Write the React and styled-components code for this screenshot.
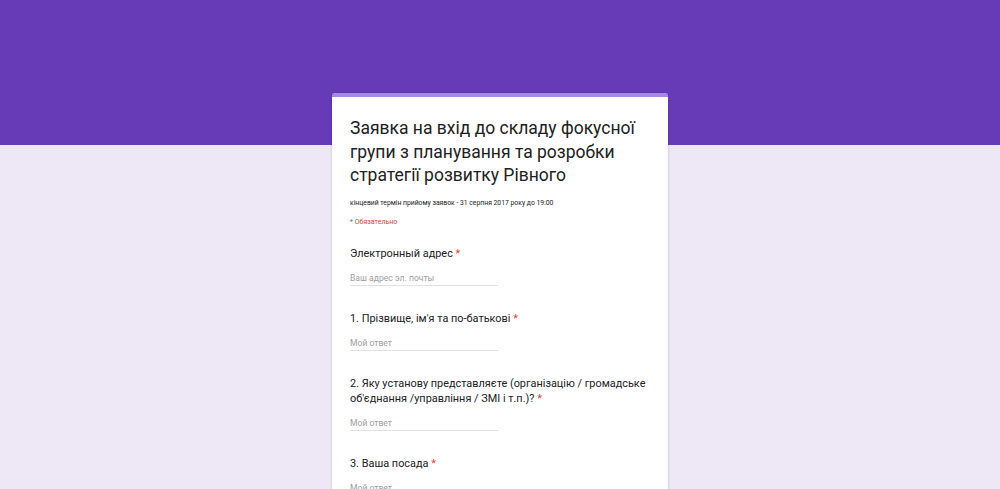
import React from "react";
import styled, { createGlobalStyle } from "styled-components";

const GlobalStyle = createGlobalStyle`
  html, body {
    margin: 0;
    padding: 0;
  }
  body {
    font-family: Roboto, "Noto Sans", Arial, sans-serif;
    background: #ede7f6;
  }
`;

const Page = styled.div`
  height: 489px;
  background: linear-gradient(#673ab7 0, #673ab7 145px, #ede7f6 145px);
  display: flex;
  justify-content: center;
  padding-top: 93px;
  overflow: hidden;
  box-sizing: border-box;
`;

const Card = styled.div`
  width: 336px;
  background: #fff;
  border-top: 4px solid #a48ae0;
  border-radius: 2px 2px 0 0;
  box-shadow: 0 0 1px rgba(0, 0, 0, 0.25), 0 1px 3px rgba(0, 0, 0, 0.12);
  padding: 20px 18px 0;
  box-sizing: border-box;
  align-self: flex-start;
`;

const Title = styled.h1`
  margin: 0;
  font-size: 17.5px;
  line-height: 23.5px;
  font-weight: 400;
  color: #212121;
`;

const Description = styled.div`
  margin-top: 10px;
  font-size: 6.8px;
  line-height: 10px;
  color: #212121;
`;

const Required = styled.div`
  margin-top: 9px;
  font-size: 7px;
  line-height: 10px;
  color: #db4437;
`;

const Questions = styled.div`
  margin-top: 19px;
`;

const Question = styled.div`
  padding-bottom: 25px;
`;

const Label = styled.div`
  font-size: 10.9px;
  line-height: 15px;
  color: #202124;
`;

const Star = styled.span`
  color: #db4437;
`;

const Answer = styled.div`
  margin-top: 11px;
  width: 148px;
  font-size: 8.6px;
  line-height: 12px;
  color: #9e9e9e;
  padding-bottom: 1px;
  border-bottom: 1px solid #e0e0e0;
`;

const questions = [
  { label: "Электронный адрес", placeholder: "Ваш адрес эл. почты" },
  { label: "1. Прізвище, ім'я та по-батькові", placeholder: "Мой ответ" },
  {
    label:
      "2. Яку установу представляєте (організацію / громадське об'єднання /управління / ЗМІ і т.п.)?",
    placeholder: "Мой ответ",
  },
  { label: "3. Ваша посада", placeholder: "Мой ответ" },
];

export default function App() {
  return (
    <>
      <GlobalStyle />
      <Page>
        <Card>
          <Title>
            Заявка на вхід до складу фокусної групи з планування та розробки
            стратегії розвитку Рівного
          </Title>
          <Description>
            кінцевий термін прийому заявок - 31 серпня 2017 року до 19:00
          </Description>
          <Required>* Обязательно</Required>
          <Questions>
            {questions.map((q) => (
              <Question key={q.label}>
                <Label>
                  {q.label} <Star>*</Star>
                </Label>
                <Answer>{q.placeholder}</Answer>
              </Question>
            ))}
          </Questions>
        </Card>
      </Page>
    </>
  );
}
